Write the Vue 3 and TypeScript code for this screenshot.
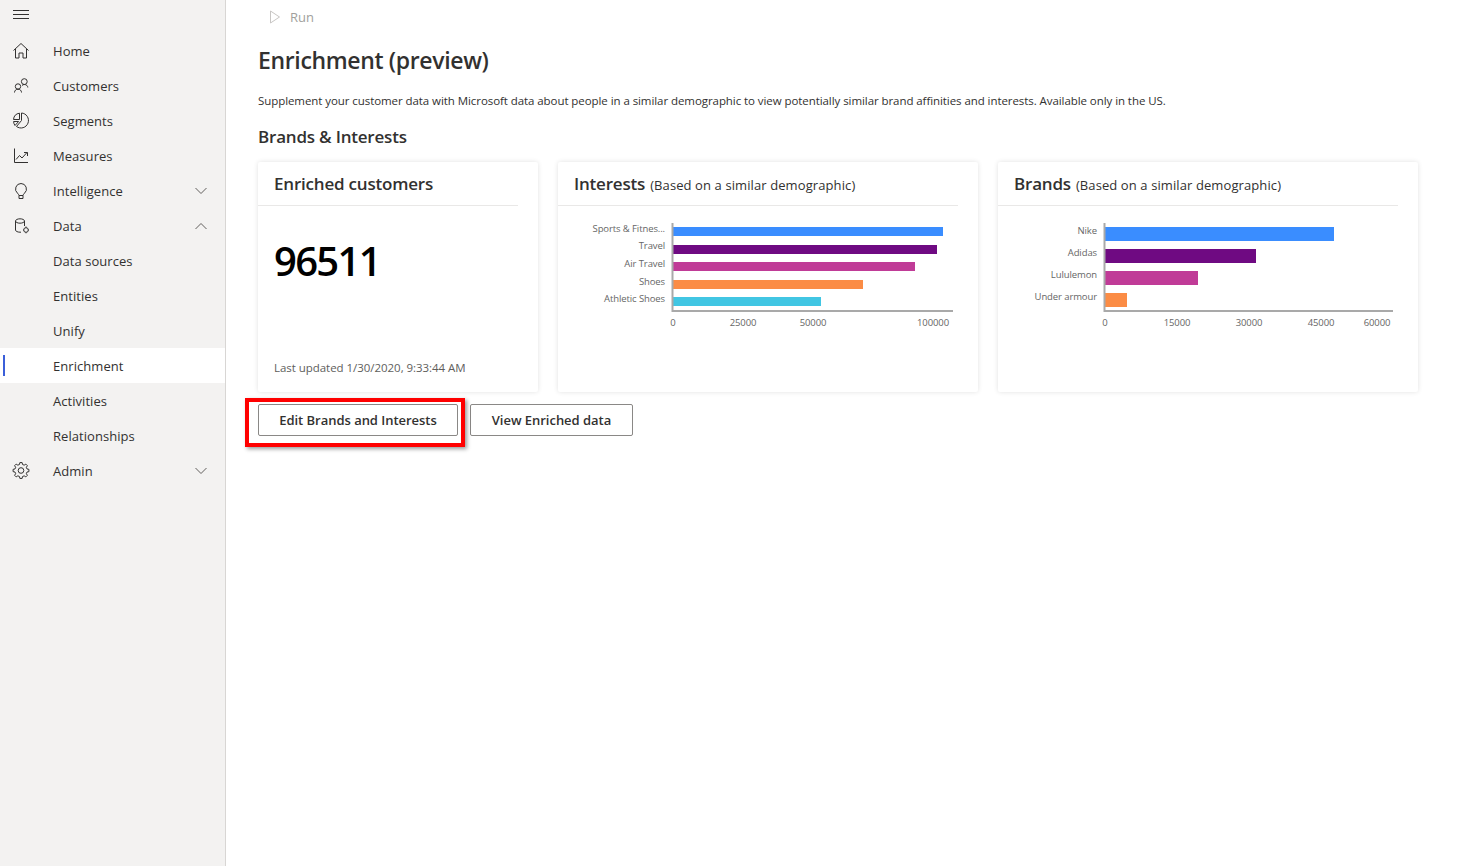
<template>
  <div class="shell">
    <nav class="side">
      <div class="burger">
        <svg width="16" height="16" viewBox="0 0 16 16" fill="none" stroke="#323130"><path d="M0 3.500h16M0 7.500h16M0 11.500h16"/></svg>
      </div>
      <div v-for="item in navItems" :key="item.label" class="nav-row" :class="{ active: item.active }">
        <span class="nav-icon">
          <svg v-if="item.icon" width="18" height="18" viewBox="0 0 18 18" fill="none" stroke="#323130" stroke-width="1">
            <path :d="icons[item.icon]" />
          </svg>
        </span>
        <span class="nav-label">{{ item.label }}</span>
        <svg v-if="item.chevron" class="chev" width="12" height="8" viewBox="0 0 12 8" fill="none" stroke="#605e5c">
          <path :d="item.chevron === 'down' ? 'M0.5 1l5.5 5.5 5.5-5.5' : 'M0.5 7l5.5-5.5 5.5 5.5'" />
        </svg>
      </div>
    </nav>

    <main class="content">
      <div class="cmdbar">
        <svg width="12" height="14" viewBox="0 0 12 14" fill="none" stroke="#c8c6c4"><path d="M1.5 1v12l9-6z"/></svg>
        <span>Run</span>
      </div>
      <h1>Enrichment (preview)</h1>
      <p class="desc">Supplement your customer data with Microsoft data about people in a similar demographic to view potentially similar brand affinities and interests. Available only in the US.</p>
      <h2>Brands &amp; Interests</h2>

      <div class="cards">
        <section class="card small">
          <header class="card-head"><span class="card-title">Enriched customers</span></header>
          <div class="big-num">96511</div>
          <div class="updated">Last updated 1/30/2020, 9:33:44 AM</div>
        </section>

        <section v-for="chart in charts" :key="chart.title" class="card wide">
          <header class="card-head">
            <span class="card-title">{{ chart.title }}</span>
            <span class="card-sub">(Based on a similar demographic)</span>
          </header>
          <svg class="chart" width="420" height="130" viewBox="0 0 420 130">
            <text v-for="b in chart.bars" :key="b.label" class="lbl" :x="chart.axisX - 8" :y="b.labelY" text-anchor="end">{{ b.label }}</text>
            <rect v-for="b in chart.bars" :key="b.color" :x="chart.axisX" :y="b.y" :width="b.w" :height="chart.barH" :fill="b.color" />
            <path :d="`M${chart.axisX - 0.5} 17V105H395`" fill="none" stroke="#a9a9a9" stroke-width="2" />
            <text v-for="t in chart.ticks" :key="t.label" class="tick" :x="t.x" y="120" text-anchor="middle">{{ t.label }}</text>
          </svg>
        </section>
      </div>

      <div class="actions">
        <div class="callout">
          <button class="btn edit">Edit Brands and Interests</button>
        </div>
        <button class="btn view">View Enriched data</button>
      </div>
    </main>
  </div>
</template>

<script setup lang="ts">
interface NavItem {
  label: string;
  icon?: string;
  chevron?: 'up' | 'down';
  active?: boolean;
}

// gear outline with square-ish teeth
function gearPath(cx: number, cy: number, outer: number, inner: number, teeth: number): string {
  const pts: string[] = [];
  const step = (Math.PI * 2) / teeth;
  for (let i = 0; i < teeth; i++) {
    const a = i * step;
    const spots: [number, number][] = [
      [inner, a - step * 0.32],
      [outer, a - step * 0.18],
      [outer, a + step * 0.18],
      [inner, a + step * 0.32],
    ];
    for (const [r, t] of spots) {
      pts.push(`${(cx + r * Math.cos(t)).toFixed(2)} ${(cy + r * Math.sin(t)).toFixed(2)}`);
    }
  }
  return `M${pts.join('L')}z`;
}

const icons: Record<string, string> = {
  home: 'M1.500 8.500L9 1.500l7.500 7M3.500 7v9h3.500v-5h4v5h3.500V7',
  customers: 'M2.500 15.500c0-2 1.500-3.300 3.500-3.300s3.500 1.300 3.500 3.300M6 12.200a2.700 2.700 0 1 0 0-5.400 2.700 2.700 0 0 0 0 5.400M10 8.500c.6-.7 1.400-1 2.300-1 2 0 3.500 1.300 3.500 3M12.300 7.500a2.900 2.900 0 1 0 0-5.800 2.900 2.900 0 0 0 0 5.800',
  segments: 'M9.500 1a7.500 7.500 0 1 1-5 13.500L9.500 8.500V1zM7.500 1.200A7 7 0 0 0 1.500 7.500h6zM1.600 9.500h5L3 13.500a7 7 0 0 1-1.400-4z',
  measures: 'M2.500 1.500V15.500H16M4 12.500l3.500-4 2.500 2.500 5-5.500M12 5.500h3.500V9',
  bulb: 'M9 1.500a5.500 5.500 0 0 0-3.500 9.700c.8.700 1.300 1.600 1.500 2.300h4c.2-.7.700-1.600 1.500-2.300A5.500 5.500 0 0 0 9 1.500zM7 13.500v3h4v-3',
  data: 'M3.500 4c0-1.200 2-2.200 4.500-2.200S12.500 2.800 12.500 4 10.500 6.200 8 6.200 3.500 5.200 3.500 4zM3.500 4v9c0 1.200 2 2.200 4.500 2.200h1M12.500 4v5M14 10.700a2.300 2.300 0 1 0 0 4.600 2.300 2.300 0 0 0 0-4.600zM14 9.500v1.200M14 15.300v1M11 13h.7M16.300 13h.7',
  gear: gearPath(9, 8.500, 8, 6.200, 8) + 'M9 5.700a2.800 2.800 0 1 0 0 5.600 2.800 2.800 0 0 0 0-5.600z',
};

const navItems: NavItem[] = [
  { label: 'Home', icon: 'home' },
  { label: 'Customers', icon: 'customers' },
  { label: 'Segments', icon: 'segments' },
  { label: 'Measures', icon: 'measures' },
  { label: 'Intelligence', icon: 'bulb', chevron: 'down' },
  { label: 'Data', icon: 'data', chevron: 'up' },
  { label: 'Data sources' },
  { label: 'Entities' },
  { label: 'Unify' },
  { label: 'Enrichment', active: true },
  { label: 'Activities' },
  { label: 'Relationships' },
  { label: 'Admin', icon: 'gear', chevron: 'down' },
];

const charts = [
  {
    title: 'Interests',
    axisX: 115,
    barH: 9,
    bars: [
      { label: 'Sports & Fitnes...', labelY: 26, y: 21, w: 270, color: '#3a8dff' },
      { label: 'Travel', labelY: 43, y: 39, w: 264, color: '#6f0a82' },
      { label: 'Air Travel', labelY: 61, y: 56, w: 242, color: '#c03b97' },
      { label: 'Shoes', labelY: 79, y: 74, w: 190, color: '#fb8c45' },
      { label: 'Athletic Shoes', labelY: 96, y: 91, w: 148, color: '#41c6e3' },
    ],
    ticks: [
      { label: '0', x: 115 },
      { label: '25000', x: 185 },
      { label: '50000', x: 255 },
      { label: '100000', x: 375 },
    ],
  },
  {
    title: 'Brands',
    axisX: 107,
    barH: 14,
    bars: [
      { label: 'Nike', labelY: 28, y: 21, w: 229, color: '#3a8dff' },
      { label: 'Adidas', labelY: 50, y: 43, w: 151, color: '#6f0a82' },
      { label: 'Lululemon', labelY: 72, y: 65, w: 93, color: '#c03b97' },
      { label: 'Under armour', labelY: 94, y: 87, w: 22, color: '#fb8c45' },
    ],
    ticks: [
      { label: '0', x: 107 },
      { label: '15000', x: 179 },
      { label: '30000', x: 251 },
      { label: '45000', x: 323 },
      { label: '60000', x: 379 },
    ],
  },
];
</script>

<style scoped>
.shell {
  display: flex;
  min-height: 866px;
  font-family: "Open Sans", "Noto Sans", sans-serif;
  color: #323130;
  background: #fff;
}

.side {
  width: 225px;
  flex-shrink: 0;
  background: #f3f2f1;
  border-right: 1px solid #d8d6d4;
}

.burger {
  height: 33px;
  padding: 7px 0 0 13px;
  box-sizing: border-box;
}
.burger svg { display: block; }

.nav-row {
  height: 35px;
  display: flex;
  align-items: center;
  font-size: 13px;
  letter-spacing: 0.05px;
  position: relative;
}
.nav-row.active { background: #fff; }
.nav-row.active::before {
  content: "";
  position: absolute;
  left: 3px;
  top: 7px;
  width: 2px;
  height: 21px;
  background: #3b5fd9;
}

.nav-icon {
  width: 53px;
  padding-left: 12px;
  box-sizing: border-box;
  display: flex;
  align-items: center;
  flex-shrink: 0;
}

.nav-label { flex: 1; }
.chev { margin-right: 18px; }

.content {
  flex: 1;
  padding: 0 44px 0 32px;
}

.cmdbar {
  height: 34px;
  display: flex;
  align-items: center;
  gap: 9px;
  padding-left: 11px;
  font-size: 13px;
  color: #a19f9d;
}

h1 {
  margin: 8px 0 0;
  font-size: 23px;
  line-height: 36px;
  font-weight: 600;
  letter-spacing: -0.35px;
}

.desc {
  margin: 15px 0 0;
  font-size: 11.5px;
  line-height: 16px;
  letter-spacing: -0.07px;
}

h2 {
  margin: 14px 0 0;
  font-size: 17px;
  line-height: 28px;
  font-weight: 600;
  letter-spacing: -0.2px;
}

.cards {
  display: flex;
  gap: 20px;
  margin-top: 11px;
}

.card {
  height: 230px;
  background: #fff;
  border-radius: 2px;
  box-shadow: 0 0 5px rgba(0, 0, 0, 0.12);
  display: flex;
  flex-direction: column;
}
.card.small { width: 280px; }
.card.wide { width: 420px; }

.card-head {
  height: 43px;
  margin-right: 20px;
  padding-left: 16px;
  border-bottom: 1px solid #e9e8e7;
  display: flex;
  align-items: center;
  gap: 5px;
}

.card-title {
  font-size: 17px;
  font-weight: 600;
  letter-spacing: -0.2px;
}
.card-sub {
  font-size: 13px;
  letter-spacing: 0.1px;
  padding-top: 2px;
}

.big-num {
  margin: 28px 0 0 16px;
  font-size: 40px;
  line-height: 54px;
  font-weight: 600;
  color: #000;
  letter-spacing: -1.7px;
}

.updated {
  margin: auto 0 16px 16px;
  font-size: 11.5px;
  line-height: 16px;
  color: #605e5c;
  letter-spacing: -0.04px;
}

.chart { display: block; }
.lbl, .tick {
  font-size: 9.5px;
  fill: #666;
  letter-spacing: -0.1px;
}

.actions {
  display: flex;
  gap: 12px;
  margin-top: 12px;
}

.callout { position: relative; }
.callout::after {
  content: "";
  position: absolute;
  left: -13px;
  top: -6px;
  width: 220px;
  height: 49px;
  box-sizing: border-box;
  border: 4px solid #f00;
  box-shadow: 2px 2px 4px rgba(0, 0, 0, 0.4);
  pointer-events: none;
}

.btn {
  height: 32px;
  display: block;
  background: #fff;
  border: 1px solid #8a8886;
  border-radius: 2px;
  font-family: inherit;
  font-size: 13px;
  font-weight: 600;
  color: #323130;
  letter-spacing: -0.03px;
  padding: 0;
}
.btn.edit { width: 200px; }
.btn.view { width: 163px; }
</style>
